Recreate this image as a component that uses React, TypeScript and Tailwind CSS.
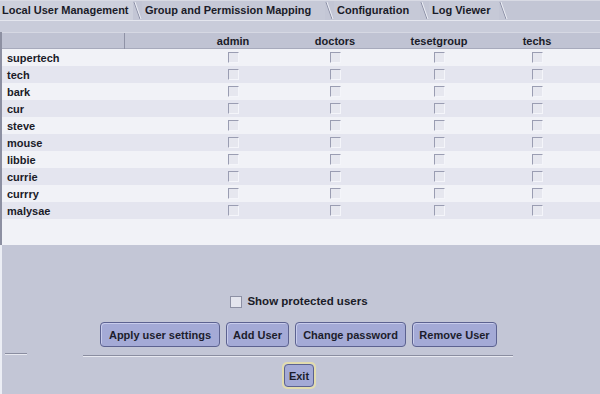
import React from "react";

const users = ["supertech", "tech", "bark", "cur", "steve", "mouse", "libbie", "currie", "currry", "malysae"];
const groups = ["admin", "doctors", "tesetgroup", "techs"];
const tabs = [
  { label: "Local User Management", w: "w-[133px]" },
  { label: "Group and Permission Mapping", w: "w-[183px]" },
  { label: "Configuration", w: "w-[86px]" },
  { label: "Log Viewer", w: "w-[70px]" },
];

function Slash() {
  return (
    <svg width="9" height="19" viewBox="0 0 9 19" className="shrink-0">
      <line x1="1" y1="1" x2="7" y2="18" stroke="#8c90a6" strokeWidth="1" />
      <line x1="2" y1="1" x2="8" y2="18" stroke="#eceef5" strokeWidth="1" />
    </svg>
  );
}

function Box() {
  return (
    <div className="w-[11px] h-[11px] bg-[#e6e7ef] border-t border-l border-t-[#9a9db2] border-l-[#9a9db2] border-r border-b border-r-[#f4f5fa] border-b-[#f4f5fa]" />
  );
}

function Btn({ children, w }: { children: React.ReactNode; w: string }) {
  return (
    <button
      type="button"
      className={`${w} h-[25px] rounded-[4px] border border-[#5c6290] bg-[#a4aad6] shadow-[inset_1px_1px_0_#c8ccec] text-[11px] font-bold text-[#1c1d2c]`}
    >
      {children}
    </button>
  );
}

export default function App() {
  return (
    <div className="w-[600px] h-[394px] flex flex-col overflow-hidden bg-[#c5c8d7] font-['Liberation_Sans',Arial,sans-serif] text-[11px] font-bold text-[#1a1b28]">
      {/* tab strip */}
      <div className="h-[20px] flex items-end bg-[#c3c6d5] border-t border-[#d8dae4]">
        {tabs.map((t, i) => (
          <div key={t.label} className="flex items-end">
            <div
              className={`${t.w} h-[19px] flex items-center ${i === 0 ? "pl-[2px] bg-[#cdd0dc]" : "pl-[3px] bg-[#c6c9d7]"}`}
            >
              {t.label}
            </div>
            <Slash />
          </div>
        ))}
      </div>
      <div className="h-[12px] bg-[#c9ccda] border-t border-[#e4e6ee]" />

      {/* table */}
      <div className="h-[213px] flex flex-col border-l-2 border-[#8d90a2] bg-[#f1f2f7]">
        <div className="h-[17px] grid grid-cols-[123px_57px_102px_102px_106px_90px] items-center bg-[#c0c3d3] border-t border-[#d6d8e3] border-b border-b-[#a7aabc]">
          <div className="h-full border-r border-[#8f92a6]" />
          <div />
          {groups.map((g) => (
            <div key={g} className="text-center">
              {g}
            </div>
          ))}
        </div>
        {users.map((u, i) => (
          <div
            key={u}
            className={`h-[17px] grid grid-cols-[180px_102px_102px_106px_90px] items-center ${i % 2 === 0 ? "bg-[#f1f2f7]" : "bg-[#e4e5ef]"}`}
          >
            <div className="pl-[5px] pt-[1px]">{u}</div>
            {groups.map((g) => (
              <div key={g} className="flex justify-center">
                <Box />
              </div>
            ))}
          </div>
        ))}
        <div className="flex-1" />
      </div>

      {/* bottom panel */}
      <div className="flex-1 flex flex-col border-l-2 border-[#eceef5] bg-[#c3c6d6]">
        <div className="h-[48px]" />
        <div className="flex justify-center items-center gap-[5px] pr-[4px]">
          <div className="w-[12px] h-[12px] bg-[#e4e5ee] border border-[#8d90a4]" />
          <span className="text-[11.5px]">Show protected users</span>
        </div>
        <div className="mt-[12px] flex justify-center gap-[6px] pr-[5px]">
          <Btn w="w-[120px]">Apply user settings</Btn>
          <Btn w="w-[63px]">Add User</Btn>
          <Btn w="w-[111px]">Change password</Btn>
          <Btn w="w-[85px]">Remove User</Btn>
        </div>
        <div className="mt-[6px] flex items-start pl-[3px]">
          <div className="w-[22px] border-t border-[#8a8da0] border-b border-b-[#e8e9f1]" />
          <div className="mt-[2px] ml-[56px] w-[430px] border-t border-[#8a8da0] border-b border-b-[#e8e9f1]" />
        </div>
        <div className="mt-[5px] flex justify-center pr-[4px]">
          <div className="rounded-[5px] border-2 border-[#e2dcae] p-0">
            <button
              type="button"
              className="w-[30px] h-[23px] rounded-[4px] border border-[#5c6290] bg-[#a4aad6] text-[11px] font-bold text-[#1c1d2c]"
            >
              Exit
            </button>
          </div>
        </div>
      </div>
    </div>
  );
}
